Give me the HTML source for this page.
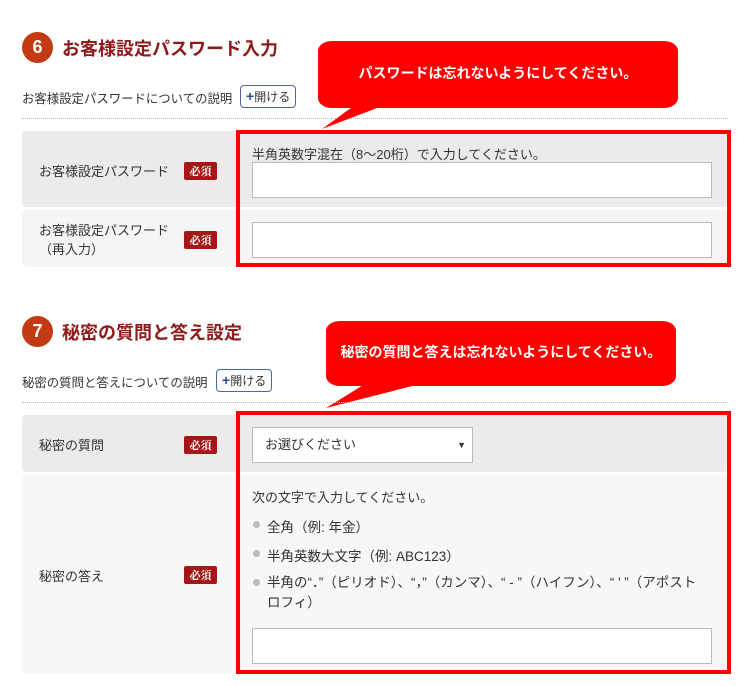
<!DOCTYPE html>
<html><head><meta charset="utf-8"><style>
*{margin:0;padding:0;box-sizing:border-box}
body{width:750px;height:686px;background:#fff;position:relative;overflow:hidden;font-family:"Liberation Sans","Noto Sans CJK JP",sans-serif;color:#333;font-size:13px}
.a{position:absolute}
.circ{width:31px;height:31px;border-radius:50%;background:#c43a12;color:#fff;font-weight:bold;font-size:18px;text-align:center;line-height:31px}
.title{font-size:18px;font-weight:bold;color:#8e1b1b;white-space:nowrap}
.btn{border:1px solid #4a6a9c;border-radius:4px;background:#fff;font-size:12px;height:23px;line-height:21px;padding:0 5px;white-space:nowrap}
.btn b{color:#2a4f8a;font-size:14px}
.dot{height:0;border-top:1px dotted #bbb;left:22px;width:706px}
.row{left:22px;width:706px;border-radius:4px}
.badge{width:33px;height:18px;background:#a51616;color:#fff;font-size:11px;font-weight:bold;text-align:center;line-height:18px;border-radius:2px;font-family:"Noto Serif CJK SC",serif}
.inp{background:#fff;border:1px solid #bbb}
.rb{border:4px solid #f00}
.bub{background:#f00;color:#fff;font-size:14px;font-weight:bold;text-align:center;border-radius:14px/10px;white-space:nowrap}
.lbl{white-space:nowrap}
.li{white-space:nowrap;font-size:13.5px}
.bull{width:7px;height:7px;border-radius:50%;background:#bbb}
.desc{font-size:12.4px;white-space:nowrap}
</style></head><body>
<div class="a circ" style="left:22px;top:32px">6</div>
<div class="a title" style="left:62px;top:35px">お客様設定パスワード入力</div>
<div class="a desc" style="left:22px;top:89px">お客様設定パスワードについての説明</div>
<div class="a btn" style="left:240px;top:85px"><b>+</b>開ける</div>
<div class="a dot" style="top:118px"></div>
<div class="a row" style="top:131px;height:76px;background:#ebebeb"></div>
<div class="a row" style="top:210px;height:57px;background:#f5f5f5"></div>
<div class="a lbl" style="left:39px;top:161px">お客様設定パスワード</div>
<div class="a badge" style="left:184px;top:162px">必須</div>
<div class="a lbl" style="left:39px;top:221px;line-height:19px">お客様設定パスワード<br>（再入力）</div>
<div class="a badge" style="left:184px;top:231px">必須</div>
<div class="a" style="left:252px;top:144px">半角英数字混在（8～20桁）で入力してください。</div>
<div class="a inp" style="left:252px;top:162px;width:460px;height:36px"></div>
<div class="a inp" style="left:252px;top:222px;width:460px;height:36px"></div>
<div class="a rb" style="left:236px;top:130px;width:495px;height:137px"></div>
<svg class="a" style="left:0;top:0" width="750" height="686"><polygon points="355,105 322,129 385,105" fill="#f00"/><polygon points="365,384 326,408 420,384" fill="#f00"/></svg>
<div class="a bub" style="left:318px;top:41px;width:360px;height:67px;line-height:64px">パスワードは忘れないようにしてください。</div>

<div class="a circ" style="left:22px;top:316px">7</div>
<div class="a title" style="left:62px;top:319px">秘密の質問と答え設定</div>
<div class="a desc" style="left:22px;top:373px">秘密の質問と答えについての説明</div>
<div class="a btn" style="left:216px;top:369px"><b>+</b>開ける</div>
<div class="a dot" style="top:402px"></div>
<div class="a row" style="top:415px;height:57px;background:#ebebeb"></div>
<div class="a row" style="top:475px;height:198px;background:#f7f7f7"></div>
<div class="a lbl" style="left:39px;top:435px">秘密の質問</div>
<div class="a badge" style="left:184px;top:436px">必須</div>
<div class="a lbl" style="left:39px;top:566px">秘密の答え</div>
<div class="a badge" style="left:184px;top:566px">必須</div>
<div class="a inp" style="left:252px;top:427px;width:221px;height:36px;line-height:34px;padding-left:12px">お選びください<span style="position:absolute;right:6px;font-size:9px">▼</span></div>
<div class="a" style="left:252px;top:487px">次の文字で入力してください。</div>
<div class="a bull" style="left:253px;top:521px"></div><div class="a li" style="left:267px;top:516px">全角（例: 年金）</div>
<div class="a bull" style="left:253px;top:550px"></div><div class="a li" style="left:267px;top:545px">半角英数大文字（例: ABC123）</div>
<div class="a bull" style="left:253px;top:579px"></div><div class="a li" style="left:267px;top:573px;line-height:20px">半角の“．”（ピリオド）、“，”（カンマ）、“ - ”（ハイフン）、“ ' ”（アポスト<br>ロフィ）</div>
<div class="a inp" style="left:252px;top:628px;width:460px;height:36px"></div>
<div class="a rb" style="left:236px;top:411px;width:495px;height:263px"></div>
<div class="a bub" style="left:326px;top:321px;width:350px;height:65px;line-height:62px">秘密の質問と答えは忘れないようにしてください。</div>
</body></html>
